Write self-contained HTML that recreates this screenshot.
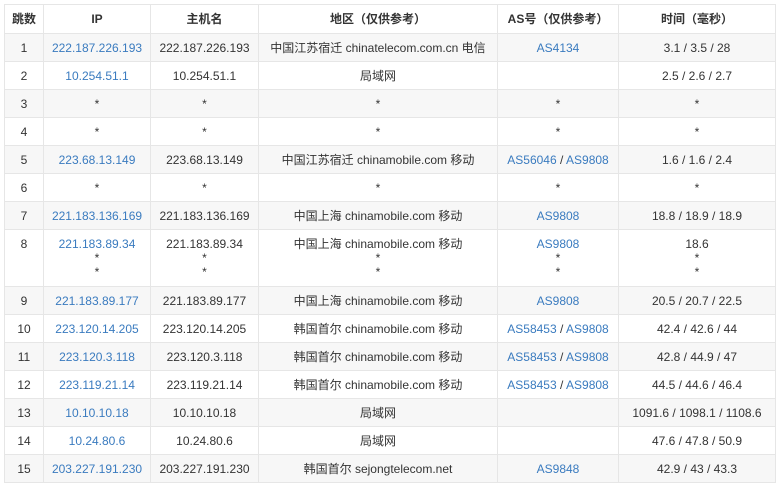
<!DOCTYPE html>
<html><head><meta charset="utf-8"><style>
body{margin:0;background:#fff;font-family:"Liberation Sans","Noto Sans CJK SC",sans-serif;font-size:12px;color:#333;}
table{position:absolute;left:4px;top:4px;width:771px;border-collapse:collapse;table-layout:fixed;}
td,th{border:1px solid #e6e6e6;text-align:center;padding:0;line-height:14px;}
th{height:28px;font-weight:bold;font-size:12px;}
td{height:27px;}
tbody tr:nth-child(odd){background:#f7f7f7;}
a{color:#3a7bbf;text-decoration:none;}
.t{height:56px;}
</style></head><body>
<table>
<colgroup><col style="width:39px"><col style="width:107px"><col style="width:108px"><col style="width:239px"><col style="width:121px"><col style="width:157px"></colgroup>
<thead><tr><th>跳数</th><th>IP</th><th>主机名</th><th>地区（仅供参考）</th><th>AS号（仅供参考）</th><th>时间（毫秒）</th></tr></thead>
<tbody>
<tr><td>1</td><td><a>222.187.226.193</a></td><td>222.187.226.193</td><td>中国江苏宿迁 chinatelecom.com.cn 电信</td><td><a>AS4134</a></td><td>3.1 / 3.5 / 28</td></tr>
<tr><td>2</td><td><a>10.254.51.1</a></td><td>10.254.51.1</td><td>局域网</td><td></td><td>2.5 / 2.6 / 2.7</td></tr>
<tr><td>3</td><td>*</td><td>*</td><td>*</td><td>*</td><td>*</td></tr>
<tr><td>4</td><td>*</td><td>*</td><td>*</td><td>*</td><td>*</td></tr>
<tr><td>5</td><td><a>223.68.13.149</a></td><td>223.68.13.149</td><td>中国江苏宿迁 chinamobile.com 移动</td><td><a>AS56046</a> / <a>AS9808</a></td><td>1.6 / 1.6 / 2.4</td></tr>
<tr><td>6</td><td>*</td><td>*</td><td>*</td><td>*</td><td>*</td></tr>
<tr><td>7</td><td><a>221.183.136.169</a></td><td>221.183.136.169</td><td>中国上海 chinamobile.com 移动</td><td><a>AS9808</a></td><td>18.8 / 18.9 / 18.9</td></tr>
<tr><td class="t" style="vertical-align:top;padding-top:7px;height:49px">8</td><td style="vertical-align:top;padding-top:7px"><a>221.183.89.34</a><br>*<br>*</td><td style="vertical-align:top;padding-top:7px">221.183.89.34<br>*<br>*</td><td style="vertical-align:top;padding-top:7px">中国上海 chinamobile.com 移动<br>*<br>*</td><td style="vertical-align:top;padding-top:7px"><a>AS9808</a><br>*<br>*</td><td style="vertical-align:top;padding-top:7px">18.6<br>*<br>*</td></tr>
<tr><td>9</td><td><a>221.183.89.177</a></td><td>221.183.89.177</td><td>中国上海 chinamobile.com 移动</td><td><a>AS9808</a></td><td>20.5 / 20.7 / 22.5</td></tr>
<tr><td>10</td><td><a>223.120.14.205</a></td><td>223.120.14.205</td><td>韩国首尔 chinamobile.com 移动</td><td><a>AS58453</a> / <a>AS9808</a></td><td>42.4 / 42.6 / 44</td></tr>
<tr><td>11</td><td><a>223.120.3.118</a></td><td>223.120.3.118</td><td>韩国首尔 chinamobile.com 移动</td><td><a>AS58453</a> / <a>AS9808</a></td><td>42.8 / 44.9 / 47</td></tr>
<tr><td>12</td><td><a>223.119.21.14</a></td><td>223.119.21.14</td><td>韩国首尔 chinamobile.com 移动</td><td><a>AS58453</a> / <a>AS9808</a></td><td>44.5 / 44.6 / 46.4</td></tr>
<tr><td>13</td><td><a>10.10.10.18</a></td><td>10.10.10.18</td><td>局域网</td><td></td><td>1091.6 / 1098.1 / 1108.6</td></tr>
<tr><td>14</td><td><a>10.24.80.6</a></td><td>10.24.80.6</td><td>局域网</td><td></td><td>47.6 / 47.8 / 50.9</td></tr>
<tr><td>15</td><td><a>203.227.191.230</a></td><td>203.227.191.230</td><td>韩国首尔 sejongtelecom.net</td><td><a>AS9848</a></td><td>42.9 / 43 / 43.3</td></tr>
</tbody></table>
</body></html>
